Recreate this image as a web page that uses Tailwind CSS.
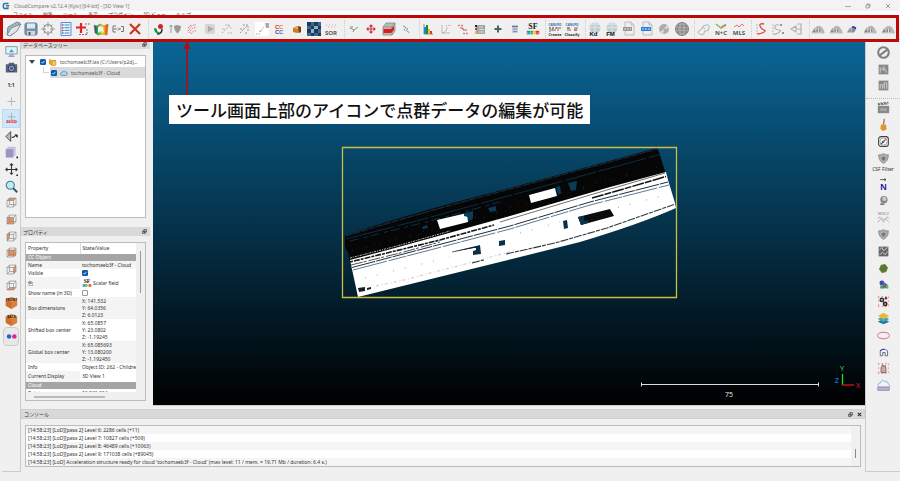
<!DOCTYPE html>
<html lang="ja">
<head>
<meta charset="utf-8">
<title>CloudCompare v2.12.4 (Kyiv) [64-bit] - [3D View 1]</title>
<script src="https://cdn.jsdelivr.net/npm/@tailwindcss/browser@4"></script>
</head>
<body class="relative flex min-h-screen flex-col overflow-hidden bg-[#f0f0f0] font-['Noto_Sans','Noto_Sans_CJK_JP',sans-serif] text-[5px] leading-[8px] text-[#333]">

<!-- Shared icon shapes -->
<svg class="absolute size-0" aria-hidden="true">
  <defs>
    <linearGradient id="bg" x1="0" y1="0" x2="0" y2="1"><stop offset="0" stop-color="#0a6697"/><stop offset="1" stop-color="#000"/></linearGradient>
    <linearGradient id="rain" x1="0" y1="0" x2="1" y2="0"><stop offset="0" stop-color="#22c"/><stop offset=".3" stop-color="#2b4"/><stop offset=".6" stop-color="#ee2"/><stop offset="1" stop-color="#e22"/></linearGradient>
    <symbol id="shield" viewBox="0 0 16 16"><path d="M8 2q3 2 6 1.500Q14 11 8 14Q2 11 2 3.500Q5 4 8 2Z" fill="#aaa" stroke="#888"/><path d="M8 5q2 1 3.500 1Q11 10 8 11.500Q5 10 4.500 6Q6 6 8 5Z" fill="#777" stroke="#bbb"/></symbol>
    <symbol id="cube" viewBox="0 0 16 16"><path d="M2.500 5.500h8v8h-8zM5.500 2.500h8v8h-8zM2.500 5.500l3-3M10.500 5.500l3-3M10.500 13.500l3-3M2.500 13.500l3-3" fill="none" stroke="#888" stroke-width=".8"/></symbol>
    <symbol id="box" viewBox="0 0 16 16"><path d="M1 4l7-3 7 3v8l-7 4-7-4z" fill="#d9803f"/><path d="M1 4l7 3v9l-7-4z" fill="#c96f30"/><path d="M1 4l7 3 7-3-7-3z" fill="#efa468"/></symbol>
    <symbol id="hill" viewBox="-1 -1 18 18"><path d="M1 12l3-5 2 5zM6 12V6l2-1v7zM9 12V5l2 1v6z" fill="#8d8d8d"/><path d="M12 12V7l2 2 1 3zM3 9l3-3 4-1 3 2" fill="#bbb" stroke="#aaa" stroke-width=".8"/><path d="M1 12.500h14" stroke="#aaa" stroke-dasharray="2 1" stroke-width=".8"/></symbol>
    <symbol id="float" viewBox="0 0 8 8"><path d="M3 1h4v4H3zM1 3.500h4v3.500H1z" fill="#ddd" stroke="#222"/></symbol>
    <symbol id="scalar" viewBox="0 0 16 16"><text x="8" y="8" text-anchor="middle" font-family="Liberation Serif" font-weight="700" font-size="9" fill="#222">SF</text><path d="M1 10h4v4H1z" fill="#28c"/><path d="M5 10h3v4H5z" fill="#2b5"/><path d="M8 10h3v4H8z" fill="#ec2"/><path d="M11 10h4v4h-4z" fill="#e33"/><path d="M1 12.500h14" stroke="#fff" stroke-dasharray="2 1" stroke-width=".6"/></symbol>
    <symbol id="printer" viewBox="0 0 16 16"><path d="M4 1h6l3 3v10H4z" fill="#eee" stroke="#aaa" stroke-width=".7"/><path d="M10 1v3h3" fill="none" stroke="#aaa" stroke-width=".7"/></symbol>
    <symbol id="gsphere" viewBox="0 0 16 16"><circle cx="8" cy="7" r="5.500" fill="#c3cdd1"/><path d="M4 4q4-3 8 0M3 7q5-2 10 0M8 1v11" stroke="#dfe7ea" fill="none"/></symbol>
  </defs>
</svg>

<header class="flex h-[11px] shrink-0 items-center gap-1 bg-[#f3f3f3] px-[2px] text-[#777]">
  <svg class="size-[8px]" viewBox="0 0 8 8"><path d="M6.500 1.500H3Q1.300 1.500 1.300 4T3 6.500h3.500" fill="none" stroke="#2679a5" stroke-width="1.500"/><path d="M4 3.500h3.500M4 5h3" stroke="#444" stroke-width=".8"/></svg>
  <h1>CloudCompare v2.12.4 (Kyiv) [64-bit] - [3D View 1]</h1>
  <div class="ml-auto flex w-[60px] justify-around">
    <button aria-label="最小化"><svg class="size-[6px]" viewBox="0 0 6 6"><path d="M0 3.500h6" stroke="#888" stroke-width=".7"/></svg></button>
    <button aria-label="元に戻す"><svg class="size-[6px]" viewBox="0 0 6 6"><path d="M1 2h3v3H1zM2 2V1h3v3H4" fill="none" stroke="#888" stroke-width=".7"/></svg></button>
    <button aria-label="閉じる"><svg class="size-[6px]" viewBox="0 0 6 6"><path d="M1 1l4 4M5 1l-4 4" stroke="#777" stroke-width=".7"/></svg></button>
  </div>
</header>
<nav class="flex h-[7px] shrink-0 gap-[10px] overflow-hidden bg-white pl-[13px] leading-[7px] text-[#555]">
  <button>ファイル</button><button>編集</button><button>ツール</button><button>表示</button><button>プラグイン</button><button>3D ビュー</button><button>ヘルプ</button>
</nav>

<!-- Main toolbar -->
<div role="toolbar" aria-label="メインツールバー" class="flex h-[22px] shrink-0 items-center border-b border-[#bbb] pr-[4px] pl-[5px] [&>button]:flex [&>button]:flex-1 [&>button]:justify-center [&>i]:h-[18px] [&>i]:w-[5px] [&>i]:border-r [&>i]:border-dotted [&>i]:border-[#ccc] [&_svg]:size-[16px] [&_svg]:shrink-0">
  <button aria-label="開く"><svg viewBox="0 0 16 16"><path d="M1 13L2 6l2-1 7-4 3 1-8 12z" fill="#aab9c0" stroke="#66777f" stroke-width=".8"/><path d="M1 14l4-7 10-4-4 7-7 5z" fill="#dde8ec" stroke="#627884" stroke-width=".8"/></svg></button>
  <button aria-label="保存"><svg viewBox="0 0 16 16"><rect x="2" y="2" width="12" height="12" rx="1.500" fill="#7592ad" stroke="#5f7c96"/><path d="M4 2.500h8v5H4z" fill="#dfe9f2"/><path d="M4 10h8v4H4z" fill="#d5d5d5"/><path d="M5.500 11h2v3h-2z" fill="#456"/></svg></button>
  <button aria-label="中心点"><svg viewBox="0 0 16 16"><circle cx="8" cy="8" r="4.300" fill="none" stroke="#999" stroke-width="1.200"/><path d="M8 1v5M8 10v5M1 8h5M10 8h5M3.500 3.500l2 2M12.500 3.500l-2 2M3.500 12.500l2-2M12.500 12.500l-2-2" stroke="#999"/></svg></button>
  <button aria-label="リスト"><svg viewBox="0 0 16 16"><path d="M3 1.500h10v13H3z" fill="#eaf3fc" stroke="#5c92cf"/><path d="M6.500 4h5M6.500 6.700h5M6.500 9.400h5M6.500 12h5" stroke="#4b82c4"/><path d="M4 4h1.500M4 9.400h1.500" stroke="#d33" stroke-width="1.500"/><path d="M4 6.700h1.500M4 12h1.500" stroke="#37a" stroke-width="1.500"/></svg></button>
  <button aria-label="点を追加"><svg viewBox="0 0 16 16"><path d="M6 2v10M1 6.500h10" stroke="#e32222" stroke-width="2.200"/><path d="M10 3h5M4 13.500h9M12 8v5" stroke="#777" stroke-dasharray="2 1"/></svg></button>
  <button aria-label="色"><svg viewBox="0 0 16 16"><path d="M1 4l3 1 3-2 4 2 4-2-1 11-4-1-5 1-3-2z" fill="url(#rain)" stroke="#a72" stroke-width=".6"/><path d="M5 6q3-2 5 1l1 4q-3-2-6 1z" fill="#f2f2f2"/></svg></button>
  <button aria-label="結合"><svg viewBox="0 0 16 16"><path d="M6 5H3v6h3M3 8h4M9 8h2M11 5.500h2.500v5H11M8 6.500l1.500 1.500L8 9.500" fill="none" stroke="#777"/></svg></button>
  <button aria-label="削除"><svg viewBox="0 0 16 16"><path d="M3 3l10 10M13 3L3 13" stroke="#cf3421" stroke-width="2.200"/></svg></button>
  <i></i>
  <button aria-label="位置合わせ"><svg viewBox="0 0 16 16"><circle cx="10.500" cy="5.500" r="2.500" fill="#d22"/><path d="M12 8q0 5-5 5" fill="none" stroke="#234" stroke-width="1.500"/><path d="M4 7q3 0 3 2t4 3q-7 2-7-5z" fill="#18934b"/></svg></button>
  <button aria-label="位置合わせ 2"><svg viewBox="0 0 16 16"><path d="M4 12V4M2.500 6L4 4l1.500 2" fill="none" stroke="#999"/><path d="M7 5l3-1 4 1q0 5-3.500 7.500Q7 10 7 5z" fill="#999"/></svg></button>
  <button aria-label="サブサンプル"><svg viewBox="0 0 16 16"><path d="M4 10q4-7 8-6M5 12q4-7 7-5M7 13q2-4 5-3M4 7q2-3 4-3" fill="none" stroke="#e0607a" stroke-dasharray="1.500 1"/></svg></button>
  <button aria-label="距離"><svg viewBox="0 0 16 16"><rect x="3" y="3" width="10" height="10" rx="2" fill="#d5d5d5"/><path d="M6 5l6 3-6 3z" fill="#aaa"/></svg></button>
  <button aria-label="雲間距離"><svg viewBox="0 0 16 16"><path d="M3 12l7-7M3 8h3M6 4h4M10 4l2 4M9 12h4" stroke="#aaa" stroke-dasharray="1.500 1" fill="none"/></svg></button>
  <button aria-label="メッシュ距離"><svg viewBox="0 0 16 16"><path d="M3 12l7-7M6 4h5v6M3 8h4M8 12h3" stroke="#999" stroke-dasharray="2 1" fill="none"/></svg></button>
  <button aria-label="最近傍"><svg viewBox="0 0 16 16"><rect x="1" y="1" width="14" height="14" fill="#fff"/><path d="M11 2h4v5h-3z" fill="#aaa"/><path d="M10 6l-4 5M2 13h4M5 10h3" stroke="#aaa" stroke-dasharray="1.500 1"/></svg></button>
  <button aria-label="連結成分"><svg viewBox="0 0 16 16" font-family="Liberation Sans" font-weight="700" font-size="6"><text x="4" y="7.500" fill="#d33">C</text><text x="8" y="7.500" fill="#e8862b">C</text><text x="4" y="12.500" fill="#357">C</text><text x="8" y="12.500" fill="#37b">C</text></svg></button>
  <button aria-label="断面"><svg viewBox="0 0 16 16"><path d="M4 7l4-2 4 1v5l-4 1-4-1z" fill="#cf7a2b"/><path d="M9 5l3 1v5l-2 1z" fill="#704016"/><path d="M5 7l4-2v3z" fill="#f1b067"/></svg></button>
  <button aria-label="ラスタ化"><svg viewBox="0 0 16 16"><path d="M1 1h14v14H1z" fill="#41688f"/><path d="M1 1h4v4H1zM8 1h4v4H8zM5 5h3v3H5zM12 5h3v3h-3zM1 8h4v4H1zM8 8h4v4H8zM5 12h3v3H5zM12 12h3v3h-3z" fill="#1f3a59"/><path d="M5 8h3v4H5zM8 5h4v3H8z" fill="#91b2cd"/></svg></button>
  <button aria-label="SOR"><svg viewBox="0 0 16 16"><path d="M3 4h10M5 6h7" stroke="#da9" stroke-dasharray="1 2"/><text x="8" y="13.500" text-anchor="middle" font-family="Open Sans" font-weight="700" font-size="6" fill="#555">SOR</text></svg></button>
  <i></i>
  <button aria-label="分割"><svg viewBox="0 0 16 16"><path d="M4 7l4 2 4-3M8 9l-1 2M4 6h3" stroke="#888" fill="none"/></svg></button>
  <button aria-label="移動"><svg viewBox="0 0 16 16"><path d="M8 4v8M4 8h8M6.500 5.500L8 4l1.500 1.500M6.500 10.500L8 12l1.500-1.500M5.500 6.500L4 8l1.500 1.500M10.500 6.500L12 8l-1.500 1.500" fill="none" stroke="#cc3c3c" stroke-width="1.200"/></svg></button>
  <button aria-label="クロスセクション"><svg viewBox="0 0 16 16"><path d="M2 6l3-4h9v8l-3 4H2z" fill="#bbb" stroke="#888" stroke-width=".8"/><path d="M2 6h9v8M11 6l3-4" fill="none" stroke="#888" stroke-width=".8"/><path d="M2.500 8H10l3-3v4l-3 3H2.500z" fill="#d91c1c"/></svg></button>
  <button aria-label="点抽出"><svg viewBox="0 0 16 16"><path d="M5 5l3 1-2 3 3 1M9 7l1 4 2 1" stroke="#7886a5" fill="none" stroke-dasharray="2 1"/></svg></button>
  <i></i>
  <button aria-label="ヒストグラム"><svg viewBox="0 0 16 16"><path d="M4 3v10h9" stroke="#445" fill="none" stroke-width=".6"/><path d="M4 6h2v7H4z" fill="#28c"/><path d="M6 4h2v9H6z" fill="#1a8a3c"/><path d="M8 8h2v5H8z" fill="#eb2"/><path d="M10 10h2v3h-2z" fill="#d33"/></svg></button>
  <button aria-label="統計"><svg viewBox="0 0 16 16"><path d="M4 4v8h8" stroke="#bbb" fill="none"/><path d="M4 12q5-1 5-6" stroke="#caa" fill="none"/><path d="M8 4.500h5" stroke="#d99" stroke-dasharray="1 1"/></svg></button>
  <button aria-label="フィルタ"><svg viewBox="0 0 16 16"><path d="M3 4.500h5M8 12.500h5" stroke="#e07a7a" stroke-width="1.500" stroke-dasharray="2 1"/><path d="M5 7h3v2h4" stroke="#c55" fill="none"/></svg></button>
  <button aria-label="カラースケール"><svg viewBox="0 0 16 16"><path d="M4 4h9v9H4z" fill="#a4a4a4"/><path d="M3 4h2v2H3z" fill="#225"/><path d="M3 7h2v2H3z" fill="#c33"/><path d="M3 10h2v3H3z" fill="#db3"/><path d="M7 6h4M7 8.500h5M7 11h5" stroke="#ddd"/></svg></button>
  <button aria-label="追加"><svg viewBox="0 0 16 16"><path d="M8 4.500v7M4.500 8h7" stroke="#4a6460" stroke-width="2"/></svg></button>
  <button aria-label="計算機"><svg viewBox="0 0 16 16"><path d="M5 4h6v8H5z" fill="#c6cdd6"/><path d="M5 5.500h6" stroke="#5f7da0" stroke-width="1.200"/><path d="M6 8h4M6 10.500h4" stroke="#8792a0"/></svg></button>
  <button aria-label="スカラーフィールド"><svg viewBox="-1 0 18 16"><use href="#scalar" width="16" height="16"/></svg></button>
  <i></i>
  <button aria-label="CANUPO Create"><svg viewBox="0 0 16 16" font-family="Open Sans" font-weight="700" text-anchor="middle"><text x="8" y="4.500" font-size="3" fill="#36a">CANUPO</text><path d="M2 7h8M4 9h8" stroke="#d44" stroke-dasharray="2 1"/><path d="M3 6v5M6 6v4M9 7h5" stroke="#2a8a80"/><text x="8" y="14.500" font-size="4" fill="#333">Create</text></svg></button>
  <button aria-label="CANUPO Classify"><svg viewBox="0 0 16 16" font-family="Open Sans" font-weight="700" text-anchor="middle"><text x="8" y="4.500" font-size="3" fill="#36a">CANUPO</text><path d="M3 7h3M10 9h3" stroke="#d44" stroke-width="1.500"/><path d="M3 9h4M10 7h4" stroke="#2a8a80"/><text x="8" y="14.500" font-size="4" fill="#333">Classify</text></svg></button>
  <i></i>
  <button aria-label="Kd"><svg viewBox="0 0 16 16"><use href="#gsphere"/><text x="6.500" y="14.500" text-anchor="middle" font-family="Liberation Sans" font-weight="700" font-size="6" fill="#111">Kd</text></svg></button>
  <button aria-label="FM"><svg viewBox="0 0 16 16"><use href="#gsphere"/><text x="6.500" y="14.500" text-anchor="middle" font-family="Liberation Sans" font-weight="700" font-size="6" fill="#111">FM</text></svg></button>
  <button aria-label="SHP"><svg viewBox="0 0 16 16"><use href="#printer"/><path d="M2 6h9v4H2z" fill="#999"/><path d="M3 8h7" stroke="#ddd" stroke-dasharray="2 1"/></svg></button>
  <button aria-label="CSV"><svg viewBox="0 0 16 16"><use href="#printer"/><path d="M2 6h10v4H2z" fill="#2b7fe0"/><path d="M3 8h8" stroke="#cfe3fb" stroke-dasharray="2 1"/></svg></button>
  <button aria-label="球"><svg viewBox="0 0 16 16"><circle cx="8" cy="8" r="5" fill="#adadad"/><path d="M8 8l3-4 2 3zM8 8l-4 3 3 2z" fill="#ddd"/></svg></button>
  <button aria-label="グリッド球"><svg viewBox="0 0 16 16"><circle cx="8" cy="8" r="6.500" fill="#b5b5b5" stroke="#888"/><path d="M1 8h14M2 5h12M2 11h12M8 1v14M5 2q-3 6 0 12M11 2q3 6 0 12" fill="none" stroke="#777" stroke-width=".7"/></svg></button>
  <i></i>
  <button aria-label="輪郭"><svg viewBox="0 0 16 16"><path d="M3 10q3-1 3-3t4-3 3 3-3 3-2 2-4 1-1-3zM6 7q2-1 3 1" fill="none" stroke="#b0b0b0"/></svg></button>
  <button aria-label="N+C"><svg viewBox="0 0 16 16"><path d="M3 3l5 4 5-3" stroke="#8b5" stroke-width="1.500" fill="none"/><path d="M8 6l5-3" stroke="#e66"/><text x="8" y="14" text-anchor="middle" font-family="Open Sans" font-weight="700" font-size="6" fill="#555">N+C</text></svg></button>
  <button aria-label="MLS"><svg viewBox="0 0 16 16"><path d="M3 6l3-2 2 2 3-3 2 2" stroke="#d77" fill="none"/><text x="8" y="14" text-anchor="middle" font-family="Open Sans" font-weight="700" font-size="6" fill="#555">MLS</text></svg></button>
  <i></i>
  <button aria-label="スプライン"><svg viewBox="0 0 16 16"><path d="M4 3v10" stroke="#bbb" stroke-dasharray="2 1"/><path d="M11 3Q6 2 7 5t4 4-2 3-4 0" fill="none" stroke="#e04343" stroke-width="1.300"/></svg></button>
  <button aria-label="スプライン点"><svg viewBox="0 0 16 16"><path d="M3 3v10" stroke="#bbb" stroke-dasharray="2 1"/><path d="M9 4Q5 3 5 6t4 3-1 3-4 0" fill="none" stroke="#b5b5b5" stroke-width="1.200"/><path d="M10 4h2M12 12h2" stroke="#777" stroke-width="1.500"/></svg></button>
  <button aria-label="展開"><svg viewBox="0 0 16 16"><path d="M3 8l5-3v6zM9 3h4v10H9M9 8h4" fill="none" stroke="#b0b0b0" stroke-width="1.200"/></svg></button>
  <i></i>
  <button aria-label="地形 1"><svg><use href="#hill"/></svg></button>
  <button aria-label="地形 2"><svg><use href="#hill"/></svg></button>
  <button aria-label="地形 3"><svg viewBox="-1 -1 18 18"><path d="M1 12l4-6 2 6z" fill="#999"/><path d="M6 6q5-2 5 3l-2 3H7z" fill="#889"/><path d="M7 6q4-1 4 2" stroke="#228" fill="none" stroke-width="1.500"/></svg></button>
  <button aria-label="地形 4"><svg><use href="#hill"/></svg></button>
  <button aria-label="地形 5"><svg><use href="#hill"/></svg></button>
</div>

<main class="flex flex-1">
  <!-- View toolbar -->
  <div class="ml-[2px] w-[19px] shrink-0 border-r border-b border-[#ccc] pt-[3px]">
    <div role="toolbar" aria-label="表示ツールバー" class="flex h-[303px] flex-col [&>button]:flex [&>button]:min-h-0 [&>button]:flex-1 [&>button]:items-center [&>button]:justify-center [&_svg]:size-[13px] [&_svg]:shrink-0">
      <button aria-label="全画面"><svg viewBox="0 0 16 16"><path d="M1 2h14v9H1z" fill="#dff3fa" stroke="#6a8c99"/><path d="M5 9l3-4 3 4z" fill="#37a6cf"/><path d="M6 12h4v2H6zM4 14h8" stroke="#99a" fill="#ccd"/></svg></button>
      <button aria-label="カメラ"><svg viewBox="0 0 16 16"><path d="M1 4h3l1-2h6l1 2h3v10H1z" fill="#59627a"/><circle cx="8" cy="9" r="4" fill="#8fa5d0" stroke="#223"/><circle cx="8" cy="9" r="1.700" fill="#234b9b"/></svg></button>
      <button class="text-[5px] font-bold text-[#333]">1:1</button>
      <button aria-label="中心"><svg viewBox="0 0 16 16"><path d="M8 3v10M3 8h10" stroke="#aaa"/></svg></button>
      <button aria-label="自動中心" class="border border-[#b9dcf3] bg-[#cde8fa]"><svg viewBox="0 0 16 16"><path d="M8 1v9M3 6h10" stroke="#9aa"/><text x="8" y="14" text-anchor="middle" font-family="Open Sans" font-weight="700" font-size="6" fill="#d34">auto</text></svg></button>
      <button aria-label="視点"><svg viewBox="0 0 16 16"><path d="M7 2v12L1 8z" fill="#bbb" stroke="#333"/><path d="M8 9q3 1 5-2M12 6h3v3z" fill="#222" stroke="#222"/></svg></button>
      <button aria-label="投影"><svg viewBox="0 0 16 16"><path d="M1 4l3-3h9v10l-3 3H1z" fill="#c3c1dd"/><path d="M1 4h9v10H1z" fill="#9a96c2"/><path d="M14 13h2v2h-2z" fill="#222"/></svg></button>
      <button aria-label="パン"><svg viewBox="0 0 16 16"><path d="M8 1v13M1 8h14M6 3l2-2 2 2M6 12l2 2 2-2M3 6L1 8l2 2M13 6l2 2-2 2" stroke="#333" stroke-width="1.300" fill="none"/><path d="M14 14h2v2h-2z" fill="#222"/></svg></button>
      <button aria-label="ズーム"><svg viewBox="0 0 16 16"><circle cx="6.500" cy="6.500" r="5" fill="#b9ebf2" stroke="#447a88" stroke-width="1.300"/><path d="M10 10l5 5" stroke="#235a78" stroke-width="2.500"/></svg></button>
      <button aria-label="上面"><svg viewBox="0 0 16 16"><path d="M2.500 5.500l3-3h8l-3 3z" fill="#e8935a"/><use href="#cube"/></svg></button>
      <button aria-label="前面"><svg viewBox="0 0 16 16"><path d="M2.500 5.500h8v8h-8z" fill="#e8935a"/><use href="#cube"/></svg></button>
      <button aria-label="左面"><svg viewBox="0 0 16 16"><path d="M2.500 5.500l3-3v8l-3 3z" fill="#e8935a"/><use href="#cube"/></svg></button>
      <button aria-label="背面"><svg viewBox="0 0 16 16"><path d="M3.500 4.500h10v8h-10z" fill="#e8935a"/><use href="#cube"/></svg></button>
      <button aria-label="右面"><svg viewBox="0 0 16 16"><path d="M10.500 5.500l3-3v8l-3 3z" fill="#e8935a"/><use href="#cube"/></svg></button>
      <button aria-label="底面"><svg viewBox="0 0 16 16"><path d="M2.500 13.500l3-3h8l-3 3z" fill="#e8935a"/><use href="#cube"/></svg></button>
      <button aria-label="FRONT"><svg viewBox="0 0 16 16"><use href="#box"/><text x="8" y="6" text-anchor="middle" font-family="Open Sans" font-weight="700" font-size="4" fill="#111">FRONT</text></svg></button>
      <button aria-label="BACK"><svg viewBox="0 0 16 16"><use href="#box"/><text x="8" y="6" text-anchor="middle" font-family="Open Sans" font-weight="700" font-size="4" fill="#111">BACK</text></svg></button>
      <button aria-label="ステレオ" class="mx-px rounded-sm border border-[#ccc] bg-[#e8e8e8]"><svg viewBox="0 0 16 16"><circle cx="5" cy="8" r="2.800" fill="#2567c9"/><circle cx="11.500" cy="8" r="2.800" fill="#e52489"/></svg></button>
    </div>
  </div>

  <div class="flex min-w-0 flex-1 flex-col">
    <div class="flex flex-1">
      <!-- Docked panels -->
      <div class="flex w-[132px] shrink-0 flex-col pr-[3px]">
        <section class="flex flex-1 flex-col">
          <div class="flex h-[9px] items-center justify-between bg-[#d9d9d9] pr-[3px] pl-[2px]"><h2>データベースツリー</h2><button aria-label="切り離す"><svg class="size-[5px]"><use href="#float"/></svg></button></div>
          <ul class="mx-[4px] mt-[6px] mb-[9px] flex-1 border border-[#bbb] bg-white text-[#555]">
            <li class="flex h-[11px] items-center gap-[3px] pl-[3px]">
              <button aria-label="折りたたむ"><svg class="size-[6px]" viewBox="0 0 6 6"><path d="M0 1h6L3 5z" fill="#444"/></svg></button>
              <span class="relative ml-[2px] flex"><input id="t1" type="checkbox" checked aria-label="表示" class="size-[6px] appearance-none rounded-[1px] border border-[#888] checked:border-[#0c5bb0] checked:bg-[#0c5bb0]"><svg class="pointer-events-none absolute inset-0 size-[6px]" viewBox="0 0 6 6"><path d="M1.500 3l1 1.200 2-2.400" fill="none" stroke="#fff" stroke-width=".8"/></svg></span>
              <svg class="size-[8px]" viewBox="0 0 8 8"><path d="M0 1l3 1h4v5l-4 1-3-2z" fill="#e8a72b"/><path d="M3 3h4v4l-4 1z" fill="#f4c763" stroke="#b87c12" stroke-width=".4"/></svg>
              <label for="t1" class="whitespace-nowrap">tochomaeb3f.las (C:/Users/p2dj...</label>
            </li>
            <li class="flex h-[11px] items-center pl-[17px]">
              <svg class="h-[11px] w-[7px]" viewBox="0 0 7 11"><path d="M.5 0v5.500H6" fill="none" stroke="#bbb" stroke-width=".7"/></svg>
              <div class="flex h-full flex-1 items-center gap-[3px] bg-[#dadada] pl-px">
                <span class="relative flex"><input id="t2" type="checkbox" checked aria-label="表示" class="size-[6px] appearance-none rounded-[1px] border border-[#888] checked:border-[#0c5bb0] checked:bg-[#0c5bb0]"><svg class="pointer-events-none absolute inset-0 size-[6px]" viewBox="0 0 6 6"><path d="M1.500 3l1 1.200 2-2.400" fill="none" stroke="#fff" stroke-width=".8"/></svg></span>
                <svg class="size-[8px]" viewBox="0 0 8 8"><path d="M2 6.500Q0 6 .8 4.300Q1 3 2.500 3Q4 .8 5.500 2.800Q7.800 3 7.300 5Q7 6.500 5.500 6.500z" fill="#a9d3f3" stroke="#4586bd" stroke-width=".7"/></svg>
                <label for="t2">tochomaeb3f - Cloud</label>
              </div>
            </li>
          </ul>
        </section>
        <section>
          <div class="flex h-[9px] items-center justify-between bg-[#d9d9d9] pr-[3px] pl-[2px]"><h2>プロパティ</h2><button aria-label="切り離す"><svg class="size-[5px]"><use href="#float"/></svg></button></div>
          <div class="mx-[4px] mt-[6px] mb-[5px] flex border border-[#bbb]">
            <div class="h-[157px] min-w-0 flex-1 overflow-hidden">
              <div class="h-[149px] overflow-hidden">
              <table class="w-full table-fixed border-collapse bg-white leading-[7px] [&_td]:overflow-hidden [&_td]:whitespace-nowrap [&_td]:p-0 [&_td]:pl-[2px] [&_th]:p-0 [&_th]:pl-[2px] [&_th]:text-left [&_th]:font-normal">
                <colgroup><col class="w-[54px]"><col></colgroup>
                <tbody>
                <tr class="h-[11px]"><th>Property</th><th class="border-l border-[#ddd]">State/Value</th></tr>
                <tr class="h-[7px] bg-[#a5a5a5] text-white"><th colspan="2">CC Object</th></tr>
                <tr class="h-[8px] bg-[#f4f4f4]"><td>Name</td><td>tochomaeb3f - Cloud</td></tr>
                <tr class="h-[8px]"><td><label for="vis">Visible</label></td><td><span class="relative flex"><input id="vis" type="checkbox" checked class="size-[6px] appearance-none rounded-[1px] border border-[#888] checked:border-[#0c5bb0] checked:bg-[#0c5bb0]"><svg class="pointer-events-none absolute inset-0 size-[6px]" viewBox="0 0 6 6"><path d="M1.500 3l1 1.200 2-2.400" fill="none" stroke="#fff" stroke-width=".8"/></svg></span></td></tr>
                <tr class="h-[12px] bg-[#f4f4f4]"><td><label for="col">色</label></td><td class="bg-white"><div class="flex items-center gap-[1px]"><svg class="size-[10px]"><use href="#scalar"/></svg><select id="col" class="appearance-none bg-transparent"><option>Scalar field</option></select></div></td></tr>
                <tr class="h-[8px]"><td><label for="sn">Show name (in 3D)</label></td><td><input id="sn" type="checkbox" class="block size-[6px] appearance-none rounded-[1px] border border-[#999] bg-white checked:bg-[#0c5bb0]"></td></tr>
                <tr class="h-[22px] bg-[#f4f4f4]"><td>Box dimensions</td><td>X: 141.532<br>Y: 64.0356<br>Z: 6.0123</td></tr>
                <tr class="h-[22px]"><td>Shifted box center</td><td>X: 65.0857<br>Y: 23.0802<br>Z: -1.19245</td></tr>
                <tr class="h-[22px] bg-[#f4f4f4]"><td>Global box center</td><td>X: 65.085693<br>Y: 13.080200<br>Z: -1.192450</td></tr>
                <tr class="h-[8px]"><td>Info</td><td>Object ID: 262 - Childre</td></tr>
                <tr class="h-[11px] bg-[#f4f4f4]"><td><label for="cd">Current Display</label></td><td class="bg-white"><select id="cd" class="block appearance-none bg-transparent"><option>3D View 1</option></select></td></tr>
                <tr class="h-[7px] bg-[#a5a5a5] text-white"><th colspan="2">Cloud</th></tr>
                <tr class="h-[8px]"><td>Points</td><td>10,931,004</td></tr>
                </tbody>
              </table>
              </div>
              <div class="mt-[4px] ml-[8px] h-[2px] w-[71px] bg-[#bbb]"></div>
            </div>
            <div class="w-[9px] pt-[8px]"><div class="mx-auto h-[42px] w-px bg-[#999]"></div></div>
          </div>
        </section>
      </div>

      <!-- 3D view -->
      <div class="min-w-0 flex-1 border-b border-[#ccc]">
        <svg class="block size-full" viewBox="153 40 712 365" preserveAspectRatio="none" role="img" aria-label="点群ビュー">
          <rect x="153" y="40" width="712" height="365" fill="url(#bg)"/>
          <path d="M345 236Q400 216 510 188L657 148L659 152L665 171L667 176L512 222L350 262L348 252L345 248Z" fill="#060607"/>
          <path d="M346 236Q420 213 510 189L657 149" fill="none" stroke="#1d2c36" stroke-width="1.200" stroke-dasharray="7 1"/>
          <path d="M346 239L420 220L510 195.500L660 154.500" fill="none" stroke="#0b3852" stroke-width=".8" stroke-dasharray="50 3 32 2"/>
          <path d="M350 241L430 221L500 202" fill="none" stroke="#0f3a56" stroke-width=".8" stroke-dasharray="9 5 4 3"/>
          <path d="M352 250L430 232L520 207L660 166M366 247L480 216L640 171M352 257L440 236L570 197" fill="none" stroke="#2e2823" stroke-width="1" stroke-dasharray="1 13 1 8 1 21"/>
          <path d="M350 260L395 248L510 216L610 187L666 172L668 180L675 203L676 208Q640 224 580 242Q540 252 500 262L358 297Z" fill="#fff"/>
          <path d="M350 262L395 251L440 240L494 225" fill="none" stroke="#15171a" stroke-width="1.600" stroke-dasharray="3 1 6 1"/>
          <path d="M350 258L395 246.500L450 231" fill="none" stroke="#eee" stroke-width=".8" stroke-dasharray="2 1 1 1"/>
          <path d="M500 222L590 195L665 173" fill="none" stroke="#333" stroke-width=".7"/>
          <path d="M351 265L400 253L440 242" fill="none" stroke="#222" stroke-width=".8" stroke-dasharray="12 1 3 2"/>
          <path d="M592 198L620 190L666 176.500" fill="none" stroke="#15100c" stroke-width="1.500" stroke-dasharray="12 1 7 1"/>
          <path d="M352 267.500L430 247L510 226L590 202L668 182" fill="none" stroke="#1c2c40" stroke-width="1" stroke-dasharray="24 1 16 1"/>
          <path d="M353 270L430 250L510 229L590 205L669 185" fill="none" stroke="#3b5573" stroke-width=".8" stroke-dasharray="35 2 18 1"/>
          <path d="M376 286L400 281L473 262L513 251" fill="none" stroke="#aaa" stroke-width=".7" stroke-dasharray="3 3 1 2"/>
          <path d="M472 263L484 260M506 254L555 243L607 228L674 204.500" fill="none" stroke="#2c373d" stroke-width="1.100" stroke-dasharray="8 1 4 1"/>
          <path d="M365 278L450 257M520 233L560 222M590 215L665 195" fill="none" stroke="#888" stroke-width=".8" stroke-dasharray="1 11 1 16"/>
          <path d="M358 288l7-1v4l-6 1zM367 288l4-1v2l-4 1z" fill="#171f25"/>
          <path d="M437 220L467 213L468 222L440 229ZM529 195L555 188L557 196L531 203Z" fill="#fff"/>
          <path d="M464 213l9-2v8l-5 2v-4l-4-1zM488 208l8-2v5l-6 1zM422 227l5-2 1 3-5 1zM556 187l4-1 1 7-3 2zM568 183l9-2-1 9-5 1z" fill="#0a3b58"/>
          <path d="M452 252L480 245l1 9-8 1v-4l3-1v-2zM499 241l6-1v5l-6 1zM563 221l4-1 1 8-4 1z" fill="#0a2f47"/>
          <path d="M450 252.800L475 248v2L452 255z" fill="#fff"/>
          <path d="M452 252L475 247" stroke="#222" stroke-width=".7"/>
          <path d="M578 217L610 209L614 216L581 225Z" fill="#0b0c0d"/><path d="M578 217l6-1v5l4-1v3l-7 2z" fill="#0a3450"/>
          <path d="M342.500 147.500H676.500V297.500H342.500Z" fill="none" stroke="#c9bf45" stroke-width="1.300"/>
          <path d="M641 384.500H818M641.500 382.500v4M818.500 382.500v4" stroke="#ddd" fill="none"/>
          <text x="729" y="396.500" text-anchor="middle" font-family="Open Sans" font-size="7" fill="#eee">75</text>
          <path d="M842.500 374V385" stroke="#1be01b" stroke-width="1.300"/><path d="M842 385H854" stroke="#e01414" stroke-width="1.300"/>
          <g font-family="Liberation Sans" font-size="7" text-anchor="middle"><text x="842" y="371" fill="#1be01b">Y</text><text x="837" y="383" fill="#2597e0">Z</text><text x="858" y="388" fill="#e01414">X</text></g>
        </svg>
      </div>
    </div>

    <!-- Console -->
    <section class="pt-[3px] pb-[5px]">
      <div class="flex h-[10px] items-center border border-[#d0d0d0] bg-[#d9d9d9] px-[2px]"><h2 class="mr-auto">コンソール</h2><button aria-label="切り離す"><svg class="mr-[4px] size-[5px]"><use href="#float"/></svg></button><button aria-label="閉じる"><svg class="size-[5px]" viewBox="0 0 6 6"><path d="M1 1l4 4M5 1L1 5" stroke="#333" stroke-width="1.300"/></svg></button></div>
      <div class="mx-[4px] mt-[6px] flex border border-[#bbb]">
        <ol class="flex-1 [&>li]:pl-[2px] [&>li:nth-child(even)]:bg-white [&>li:nth-child(odd)]:bg-[#f5f5f5]">
          <li>[14:58:23] [LoD][pass 2] Level 6: 2286 cells (+11)</li>
          <li>[14:58:23] [LoD][pass 2] Level 7: 10827 cells (+509)</li>
          <li>[14:58:23] [LoD][pass 2] Level 8: 46489 cells (+10063)</li>
          <li>[14:58:23] [LoD][pass 2] Level 9: 171038 cells (+89045)</li>
          <li>[14:58:23] [LoD] Acceleration structure ready for cloud 'tochomaeb3f - Cloud' (max level: 11 / mem. = 19.71 Mb / duration: 6.4 s.)</li>
        </ol>
        <div class="flex w-[9px] items-end justify-center pb-[8px]"><div class="h-[9px] w-px bg-[#888]"></div></div>
      </div>
    </section>
  </div>

  <!-- Plugin toolbar -->
  <div class="w-[35px] shrink-0 border-b border-l border-[#ccc] pt-[4px]">
    <div role="toolbar" aria-label="プラグイン" class="flex h-[350px] flex-col [&>button]:flex [&>button]:min-h-0 [&>button]:items-center [&>button]:justify-center [&_svg]:size-[13px] [&_svg]:shrink-0">
      <button class="flex-1" aria-label="シェーダ解除"><svg viewBox="0 0 16 16"><circle cx="8" cy="8" r="6.500" fill="none" stroke="#808080" stroke-width="2.600"/><path d="M3.500 11.500l9-7" stroke="#808080" stroke-width="2.600"/></svg></button>
      <button class="flex-1" aria-label="EDL"><svg viewBox="0 0 16 16"><path d="M2 2h12v12H2z" fill="#888"/><path d="M4 12V6l4 3V4l4 8" fill="none" stroke="#bbb" stroke-width="1.500"/></svg></button>
      <button class="flex-1" aria-label="SSAO"><svg viewBox="0 0 16 16"><path d="M2 2h12v12H2z" fill="#888"/><path d="M4 12V7h3v5M9 12V5h3v7" fill="none" stroke="#ccc" stroke-width="1.300"/></svg></button>
      <i class="h-[5px] w-full border-b border-dotted border-[#bbb]"></i>
      <button class="flex-1" aria-label="アニメーション"><svg viewBox="0 0 16 16"><path d="M1 6h14v9H1z" fill="#888"/><path d="M1 2.500l13-1.500v3L1 5.500z" fill="#777"/><path d="M3 2l2 3M7 1.500l2 3M11 1l2 3" stroke="#eee"/><path d="M4 9h8v3H4z" fill="#aaa"/></svg></button>
      <button class="flex-1" aria-label="クリーン"><svg viewBox="0 0 16 16"><path d="M9 1L8 8" stroke="#964" stroke-width="1.500"/><path d="M5 8h6l1 6-5 2-3-3z" fill="#dd963a"/></svg></button>
      <button class="flex-1" aria-label="コンパス"><svg viewBox="0 0 16 16"><rect x="2" y="2" width="12" height="12" rx="3" fill="#eee" stroke="#444" stroke-width="1.300"/><circle cx="8" cy="8" r="4.500" fill="#fff" stroke="#79a"/><path d="M12 4L9 9 7 7z" fill="#d43"/><path d="M4 12l3-5 2 2z" fill="#345"/></svg></button>
      <button class="h-[26px] flex-col whitespace-nowrap leading-[9px]"><svg><use href="#shield"/></svg>CSF Filter</button>
      <button class="flex-1" aria-label="法線"><svg viewBox="0 0 16 16"><path d="M4 2h7M9 .5l2 1.500-2 1.500" fill="none" stroke="#333"/><text x="8" y="15" text-anchor="middle" font-family="Liberation Sans" font-weight="700" font-size="11" fill="#2222a0">N</text></svg></button>
      <button class="flex-1" aria-label="HPR"><svg viewBox="0 0 16 16"><circle cx="8.500" cy="7" r="4.500" fill="#888"/><circle cx="9" cy="6" r="2.500" fill="#ccc"/><path d="M4 12.500h5" stroke="#777" stroke-width="2"/></svg></button>
      <button class="flex-1" aria-label="M3C2"><svg viewBox="0 0 16 16"><text x="8" y="5" text-anchor="middle" font-family="Open Sans" font-size="5" fill="#777">M3C2</text><path d="M1 9q3-3 5 0t5 0 4 0M1 14l4-5 3 5 3-5 4 5" fill="none" stroke="#999" stroke-dasharray="3 1"/></svg></button>
      <button class="flex-1" aria-label="PCV"><svg><use href="#shield"/></svg></button>
      <button class="flex-1" aria-label="ファセット"><svg viewBox="0 0 16 16"><path d="M2 2h12v12H2z" fill="#666"/><path d="M3 6l3-3 2 4 5-4M3 12l4-3 3 3 3-4" stroke="#ddd" fill="none"/></svg></button>
      <button class="flex-1" aria-label="Poisson"><svg viewBox="0 0 16 16"><path d="M5 4l5-1 3 4-2 5-5 1-3-4z" fill="#498033" stroke="#8a6a2c"/></svg></button>
      <button class="flex-1" aria-label="RANSAC"><svg viewBox="0 0 16 16"><circle cx="6" cy="6" r="3" fill="#3949c0"/><path d="M4 9h5v4H4z" fill="#35ab42"/><path d="M8 5l5 3-2 5-4-2z" fill="#8c4da8"/><path d="M11 9h3v4h-3z" fill="#3c5"/></svg></button>
      <button class="flex-1" aria-label="SRA"><svg viewBox="0 0 16 16"><path d="M1 2h14M1 14h14M2 2v12M14 2v12" stroke="#e99" stroke-dasharray="2 2.500" stroke-width="1.300"/><circle cx="6" cy="6" r="2" fill="none" stroke="#333" stroke-width="2"/><circle cx="10" cy="11" r="2" fill="none" stroke="#422" stroke-width="2"/><circle cx="11" cy="4" r="1.500" fill="#533"/></svg></button>
      <button class="flex-1" aria-label="レイヤー"><svg viewBox="0 0 16 16"><path d="M1 12l7-4 7 4-7 3z" fill="#2c6f9c"/><path d="M1 8.500l7-4 7 4-7 4z" fill="#36aac0"/><path d="M1 5l7-4 7 4-7 4z" fill="#edb732"/></svg></button>
      <button class="flex-1" aria-label="楕円"><svg viewBox="0 0 16 16"><ellipse cx="8" cy="8" rx="7.500" ry="4" fill="none" stroke="#dd6b7c" stroke-width="1.200"/></svg></button>
      <button class="flex-1" aria-label="ブーリアン"><svg viewBox="0 0 16 16"><path d="M4 12V6q1-2 4-2t5 2v6h-3V8H7v4z" fill="#eef" stroke="#556"/><path d="M4 6q2-2 5-2" stroke="#33a" stroke-width="1.500" fill="none"/></svg></button>
      <button class="flex-1" aria-label="分類"><svg viewBox="0 0 16 16"><path d="M1 2h14M1 14h14M2 2v12M14 2v12" stroke="#e99" stroke-dasharray="2 2.500" stroke-width="1.300"/><path d="M5 13V7l2-4 1 3 2-2 1 4v5z" fill="#caa" stroke="#755"/></svg></button>
      <button class="flex-1" aria-label="雲レイヤー"><svg viewBox="0 0 16 16"><path d="M2 10Q0 5 4 5q2-5 6-2 4 0 4 3 3 2 1 4z" fill="#eef4fb" stroke="#8a9fc0"/><path d="M1 10h14v4H1z" fill="#b9b3d0" stroke="#8f88ae"/></svg></button>
    </div>
  </div>
</main>
<footer class="h-[10px] shrink-0"></footer>

<!-- Annotation overlay -->
<div class="pointer-events-none absolute inset-x-0 top-[15px] mr-px h-[27px] border-[3px] border-[#bd0808]"></div>
<svg class="pointer-events-none absolute top-[41px] left-[182px] h-[55px] w-[10px]" viewBox="0 0 10 55"><path d="M5 4v51" stroke="#bd0808" stroke-width="1.500"/><path d="M5 0l3.500 8h-7z" fill="#bd0808"/></svg>
<p class="absolute top-[95px] left-[169px] bg-white px-[7px] py-[2px] font-['Noto_Sans_CJK_JP',sans-serif] text-[17px] leading-[25px] font-medium whitespace-nowrap text-[#111]">ツール画面上部のアイコンで点群データの編集が可能</p>
</body>
</html>
